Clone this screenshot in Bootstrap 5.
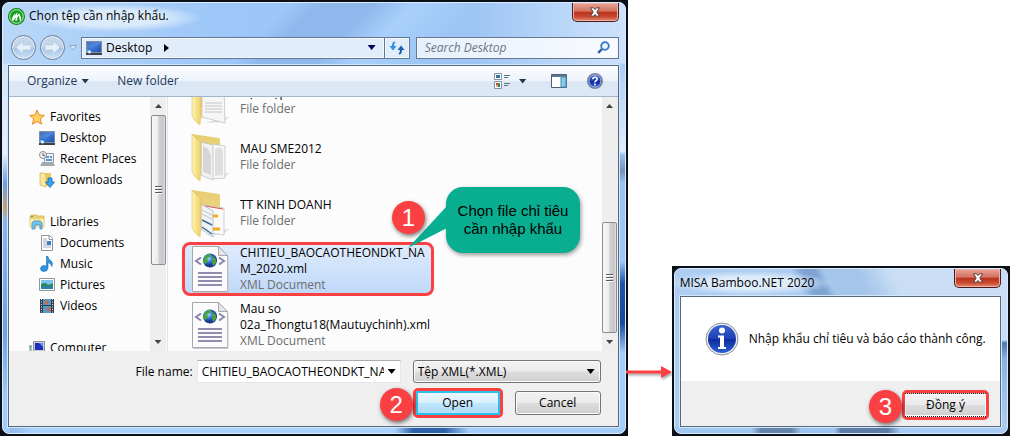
<!DOCTYPE html>
<html lang="vi">
<head>
<meta charset="utf-8">
<meta name="viewport" content="width=device-width, initial-scale=1">
<title>Chọn tệp cần nhập khẩu</title>
<link href="https://cdn.jsdelivr.net/npm/bootstrap@5.3.0/dist/css/bootstrap.min.css" rel="stylesheet">
<style>
:root { --callout-red: #fb4044; }
body { font: 12px/16px "Open Sans", "Noto Sans", sans-serif; color: #000; background: #fff; }
a { color: inherit; text-decoration: none; }
svg { display: block; flex: none; }
.stage { display: grid; grid-template-columns: minmax(0, 627fr) 44px minmax(0, 338fr); min-height: 100vh; }
.win { background: #0b0f18; padding: 2px; }
.glass { border-radius: 7px; border: 1px solid #dcecff; padding: 0 6px 6px 5px; }
.glass-main { background:
  linear-gradient(180deg, transparent 0 60px, #cfe3fa 61px, #e6f1fc 150px, #6f9fdf 180px, #c3a172 205px, #8ab6ee 218px, #6fa2e4 330px, #a3cdf9 400px) left / 7px 100% no-repeat,
  linear-gradient(180deg, transparent 0 60px, #a9cdf6 61px, #e0edfb 148px, #96bfee 152px, #7291b8 168px, #98c3f5 180px, #9cc8fa 258px, #1d55a6 280px, #154a9c 320px, #a3cdfa 350px) right / 7px 100% no-repeat,
  linear-gradient(90deg, #86b2ea, #a9d1fc 5% 63%, #2c62a8 66% 71%, #a4cdfa 75%) bottom / 100% 7px no-repeat,
  radial-gradient(ellipse 90px 14px at 110px 15px, #dcebfb 55%, transparent) no-repeat,
  linear-gradient(135deg, transparent 42%, #8fb9ec 46% 54%, #a9d0fb 60%, transparent 70%) 0 0 / 100% 66px no-repeat,
  linear-gradient(90deg, #b9d7f8, #9cc7f8 35%, #9cc5f4 75%, #cde2fb) #a3cbf7; }
.glass-msg { background:
  linear-gradient(180deg, transparent 70px, #c9dbee 71px, #4b79b2 74px, #8ab3e4 90px, #a9cbf0 150px) right / 7px 100% no-repeat,
  linear-gradient(90deg, #9fc8f3 23%, #6483a8 26% 35%, #9cc4f0 38% 48%, #5d7da6 50% 64%, #a5cbf4 68%) bottom / 100% 7px no-repeat,
  radial-gradient(ellipse 84px 12px at 75px 14px, #dfecfa 50%, transparent) no-repeat,
  linear-gradient(62deg, #aecdf2 48%, #7fa4d3 51% 54%, #a5c6ea 56% 64%, #c9def5 72%) #a9cdf4; }
.title-main { height: 28px; padding-bottom: 2px; }
.title-msg { line-height: 27px; }
.btn-x { width: 47px; height: 19px; padding: 0; border: 1px solid #4c1a1c; border-top: 0; border-radius: 0 0 5px 5px; box-shadow: inset 0 0 0 1px #eeb3a8;
  background: linear-gradient(#eaa697, #d3705f 46%, #b8311e 50%, #c9472f 75%, #e28a6c); display: grid; place-items: center; flex: none; }
.nav-row { padding: 4px 0 5px 3px; }
.nav-round { width: 25px; height: 25px; border-radius: 50%; border: 1px solid #6e7d92; padding: 0; display: grid; place-items: center;
  background: linear-gradient(#c6d6e8, #c1d5ec 48%, #a4c3e6 52%, #cfe4f8); box-shadow: inset 0 0 0 1px #e4effb; }
.field { height: 22px; border: 1px solid #66788f; background: #e1edfb; box-shadow: inset 0 0 0 1px #f1f7fe; }
.bare { border: 0; padding: 0; background: none; color: inherit; font: inherit; line-height: 16px; }
.address { flex: 1 1 303px; min-width: 0; }
.reload { padding: 0 4px; border-left: 0; }
.crumb { margin-left: 12px; }
.history { color: #000060; }
.search { flex: 0 1 203px; min-width: 0; margin-left: 6px; background: linear-gradient(90deg, #e6f0fc, #f8fbff); }
.search input { min-width: 0; outline: 0; }
.search input::placeholder { color: #70757c; font-style: italic; opacity: 1; }
.pane { border: 1px solid #56677e; outline: 1px solid #d5e7fb; background: #efefef; }
.commands { height: 31px; padding: 0 15px 0 18px; background: linear-gradient(#fcfdff, #edf3fb 50%, #dce6f4 52%, #dde8f6); border-bottom: 1px solid #a3b5cc; color: #1e395b; }
.tri { width: 8px; height: 5px; background: currentColor; clip-path: polygon(0 0, 100% 0, 50% 100%); display: inline-block; flex: none; }
.tri.flip { transform: rotate(180deg); }
.browser { height: 254px; background: #fcfcfc; overflow: hidden; }
.tree { flex: 0 0 141px; overflow: hidden; padding: 9px 0 0 20px; }
.tree ul { margin: 0 0 21px; padding: 0; list-style: none; }
.tree a { display: flex; align-items: center; gap: 5px; height: 21px; white-space: nowrap; }
.tree li + li a { padding-left: 10px; }
.bar { width: 16px; flex: none; background: #eee; padding: 0 1px; display: flex; flex-direction: column; align-items: center; color: #444; }
.bar-end { height: 18px; display: grid; place-items: center; flex: none; }
.bar .tri { width: 7px; height: 4px; }
.thumb { width: 15px; border: 1px solid #8d8d8d; border-radius: 2px; background: linear-gradient(90deg, #f7f7f7, #ececec 45%, #d2d2d4 52%, #c6c6ca 85%, #e2e2e2); display: grid; place-items: center; }
.grip { width: 7px; height: 8px; background: repeating-linear-gradient(#55585c 0 1px, #fff 1px 2px, transparent 2px 3px); }
.files { flex: 1; min-width: 0; list-style: none; margin: -24px 0 0 1px; padding: 0 0 0 14px; border-left: 1px solid #dae6f3; }
.files li { height: 56px; width: 252px; padding: 1px 0; position: relative; }
.files button { display: flex; align-items: center; text-align: left; gap: 11px; width: 100%; height: 54px; padding: 0 0 0 6px; border: 3px solid transparent; border-radius: 8px; background: none; font: inherit; color: #000; }
.files li.chosen button { border-color: var(--callout-red); background: linear-gradient(#dfebfb, #bfd9fa); }
.files small { display: block; font-size: 12px; color: #6d6d6d; }
.files .label-text { flex: 1; white-space: nowrap; }
.step { position: absolute; z-index: 3; width: 33px; height: 33px; border-radius: 50%; background: var(--callout-red); color: #fff; font: 24px/33px "Liberation Sans", sans-serif; text-align: center; box-shadow: 1px 2px 4px #0008; }
.step-file { left: 210px; top: -40px; }
.step-button { left: -36px; top: -3px; }
.tip { position: absolute; z-index: 2; left: 264px; top: -54px; width: 134px; height: 66px; border-radius: 17px; background: #09ae91; font: 15px/18px "Liberation Sans", sans-serif; box-shadow: 1px 2px 4px #0006; display: grid; place-content: center; text-align: center; white-space: nowrap; }
.tip svg { position: absolute; left: -38px; top: 18px; }
.answers { padding: 9px 17px 8px 16px; display: grid; grid-template-columns: minmax(0, 1fr) 204px 188px; column-gap: 12px; row-gap: 5px; }
.answers label { text-align: right; line-height: 23px; margin-right: -8px; }
.combo { height: 23px; background: #fff; border: 1px solid #e3e7ee; border-top-color: #abadb3; }
.combo input { min-width: 0; outline: 0; }
.chooser { position: relative; }
.chooser select { appearance: none; width: 100%; height: 23px; padding: 0 20px 0 4px; border: 1px solid #757575; border-radius: 3px; font: inherit; color: #000; background: linear-gradient(#f2f2f2, #ebebeb 49%, #dddddd 51%, #cfcfcf); box-shadow: inset 0 0 0 1px #fafafa; }
.chooser .tri { position: absolute; right: 6px; top: 9px; pointer-events: none; }
.btn-win { height: 24px; width: 86px; padding: 0; border: 1px solid #757575; border-radius: 3px; font: inherit; color: #000; background: linear-gradient(#f2f2f2, #ebebeb 49%, #dddddd 51%, #cfcfcf); box-shadow: inset 0 0 0 1px #fafafa; }
.btn-win.primary { width: 84px; border: 2px solid #2bc1ee; border-radius: 1px; background: linear-gradient(#eaf6fd, #d9f0fc 49%, #bee6fd 51%, #b2dcf5); box-shadow: none; }
.btn-win.confirm { width: 81px; border: 1px dotted #222; border-width: 1px 0; border-radius: 0; }
.marked { position: relative; border: 3px solid var(--callout-red); border-radius: 5px; line-height: 0; }
.marked .btn-win { line-height: 16px; }
.message { border: 1px solid #56677e; outline: 1px solid #d5e7fb; background: #fff; }
.notice { height: 84px; padding-left: 24px; gap: 10px; }
.confirm-row { background: #efefef; padding: 9px 11px 6px; }
.linker { align-self: end; margin-bottom: 56px; margin-left: -2px; width: 46px; position: relative; z-index: 2; filter: drop-shadow(1px 2px 1px #0005); }
</style>
</head>
<body>
<svg width="0" height="0" class="position-absolute" aria-hidden="true">
  <defs>
    <linearGradient id="gScreen" x1="0" y1="0" x2="1" y2="1"><stop offset="0" stop-color="#1b3f9a"/><stop offset=".5" stop-color="#3f79d6"/><stop offset="1" stop-color="#1d4aa6"/></linearGradient>
    <linearGradient id="gFold" x1="0" y1="0" x2="1" y2="0"><stop offset="0" stop-color="#fdf4b4"/><stop offset="1" stop-color="#edcf67"/></linearGradient>
    <linearGradient id="gBack" x1="0" y1="0" x2="0" y2="1"><stop offset="0" stop-color="#e6cd72"/><stop offset="1" stop-color="#f3dd8e"/></linearGradient>
    <radialGradient id="gGlobe" cx=".4" cy=".35"><stop offset="0" stop-color="#a5d8fa"/><stop offset=".6" stop-color="#2f6fd0"/><stop offset="1" stop-color="#16388f"/></radialGradient>
    <linearGradient id="gInfo" x1="0" y1="0" x2="0" y2="1"><stop offset="0" stop-color="#3b62cf"/><stop offset=".5" stop-color="#1c3fb4"/><stop offset=".52" stop-color="#0e2c9b"/><stop offset="1" stop-color="#2c62d8"/></linearGradient>
    <symbol id="desk" viewBox="0 0 16 14"><path d="M.5.5h15v11H.5z" fill="url(#gScreen)" stroke="#7f8ea3"/><path d="M1 1h14L8 6 1 8z" fill="#6e9fe8" opacity=".45"/><path d="M0 12h16v2H0z" fill="#39424e"/><path d="M1 9h3v2H1z" fill="#46c5ef"/><circle cx="3.500" cy="11" r="1.500" fill="#e8f7ff"/></symbol>
    <symbol id="folder" viewBox="0 0 38 48"><path d="M14 46l18-1 6-5-6 1z" fill="#b9b9b9" opacity=".5"/><path d="M1 1l20 3 7 1q1 0 1 2v34H10z" fill="url(#gBack)"/></symbol>
    <symbol id="flap" viewBox="0 0 38 48"><path d="M1 1q4 5 9 9v20l-1 2 1 1-1 15q-5-3-8-9z" fill="url(#gFold)" stroke="#dcbf62" stroke-width=".6"/></symbol>
    <symbol id="xml" viewBox="0 0 38 48"><path d="M1.500 1.500h26l9 9v36h-35z" fill="#fbfbfd" stroke="#a6a6ac"/><path d="M2 47.500h35V12" fill="none" stroke="#c9c9cf"/><path d="M27.500 1.500v9h9z" fill="#e4e4ea" stroke="#a6a6ac"/><path d="M10 12.500l-5 3.500 5 3.500M28 12.500l5 3.500-5 3.500" fill="none" stroke="#8885a8" stroke-width="2"/><circle cx="19" cy="15.500" r="7" fill="url(#gGlobe)"/><path d="M14 11q3-3 6-2l-1 3-3 1 1 4-3 2-2-3zM22 11l3 3v4l-3 3-1-4z" fill="#47a63c"/><path d="M7 28h24M7 32h24M7 36h24M7 40h24" stroke="#8f8cae" stroke-width="2"/></symbol>
    <symbol id="cross" viewBox="0 0 12 10"><path d="M1.500.8h3L6 2.600 7.500.8h3L7.800 5l2.700 4.200h-3L6 7.400 4.500 9.200h-3L4.200 5z" fill="#fff" stroke="#563b40"/></symbol>
  </defs>
</svg>

<main class="stage">
  <section class="win" aria-label="Chọn tệp">
    <div class="glass glass-main h-100 d-flex flex-column">
      <header class="d-flex justify-content-between">
        <div class="title-main d-flex align-items-center gap-1">
          <svg width="17" height="17" viewBox="0 0 16 16"><circle cx="8" cy="8" r="7.500" fill="#13a01d" stroke="#0f8417"/><circle cx="8" cy="8" r="6.400" fill="none" stroke="#d8f4d6" stroke-width=".8"/><path d="M3.500 11.500Q4 8 6.500 5q0 2-.5 3 1.500-3 3-4-.5 2-.8 3.500Q9.500 5.500 10.500 5q1.800 3 2 6.500l-1.500.5q0-3-1-5Q8.500 9 8.500 12H7q0-2 .3-3.500Q6 10 5.500 12z" fill="#fff"/></svg>
          <span>Chọn tệp cần nhập khẩu.</span>
        </div>
        <button class="btn-x" type="button" aria-label="Close"><svg width="12" height="10"><use href="#cross"/></svg></button>
      </header>
      <div class="nav-row d-flex align-items-center">
        <button class="nav-round" type="button" aria-label="Back"><svg width="15" height="13" viewBox="0 0 15 13"><path d="M0 6.500L7 0v4h8v5H7v4z" fill="#e7eff8" stroke="#b8c8da" stroke-width=".7"/></svg></button>
        <button class="nav-round ms-1" type="button" aria-label="Forward"><svg width="15" height="13" viewBox="0 0 15 13"><path d="M15 6.500L8 0v4H0v5h8v4z" fill="#e7eff8" stroke="#b8c8da" stroke-width=".7"/></svg></button>
        <svg class="ms-1 me-1" width="8" height="6" viewBox="0 0 8 6"><path d="M.5.5h7L4 5z" fill="#dbe9f8" stroke="#91a9c6"/></svg>
        <div class="field address d-flex align-items-center">
          <svg class="ms-1 me-1" width="16" height="14"><use href="#desk"/></svg>
          <a href="#">Desktop</a>
          <svg class="crumb" width="5" height="8" viewBox="0 0 5 8"><path d="M0 0l5 4-5 4z"/></svg>
          <button class="bare ms-auto px-2 d-flex history" type="button" aria-label="Previous locations"><span class="tri"></span></button>
        </div>
        <button class="field reload" type="button" aria-label="Refresh"><svg width="16" height="14" viewBox="0 0 16 14"><path d="M5.500.5Q3 1 3 5H.5L4 9.500 7.500 5H5Q5 2.500 6.500 1z" fill="#2c93d8"/><path d="M10.500 13.500Q13 13 13 9h2.500L12 4.500 8.500 9H11q0 2.500-1.500 4z" fill="#1c5fae"/></svg></button>
        <div class="field search d-flex align-items-center px-2">
          <input class="bare flex-fill" type="search" placeholder="Search Desktop" aria-label="Search Desktop">
          <svg width="13" height="13" viewBox="0 0 13 13"><circle cx="8" cy="5" r="3.800" fill="#eaf5ff" stroke="#3279c8" stroke-width="1.800"/><path d="M5 8L1.200 11.800" stroke="#2a5cab" stroke-width="2.400"/></svg>
        </div>
      </div>
      <div class="pane flex-fill">
        <div class="commands d-flex align-items-center">
          <button class="bare d-flex align-items-center gap-1" type="button">Organize <span class="tri"></span></button>
          <button class="bare ms-4 ps-1" type="button">New folder</button>
          <button class="bare ms-auto d-flex align-items-center gap-2" type="button" aria-label="Change view"><svg width="17" height="16" viewBox="0 0 17 16"><path d="M.5.5h7v6h-7zM.5 8.500h7v7h-7z" fill="#fff" stroke="#8593a5"/><path d="M2 2h4v3H2z" fill="#2b75a8"/><path d="M2 10h2v2H2z" fill="#d8443a"/><path d="M4 10h2v2H4z" fill="#3c9b45"/><path d="M2 12h2v2H2z" fill="#e4b92e"/><path d="M4 12h2v2H4z" fill="#3568c2"/><path d="M10 2.500h6M10 4.500h4M10 10.500h6M10 12.500h4" stroke="#5d6f86"/></svg><span class="tri"></span></button>
          <button class="bare ms-4" type="button" aria-label="Preview pane"><svg width="16" height="14" viewBox="0 0 16 14"><path d="M.5.5h15v13H.5z" fill="#fff" stroke="#4d6079"/><path d="M1 1h14v2H1z" fill="#63788f"/><path d="M10 3h5v10h-5z" fill="#86cbea" stroke="#4c8db3"/></svg></button>
          <button class="bare ms-3 ps-1" type="button" aria-label="Help"><svg width="16" height="16" viewBox="0 0 16 16"><circle cx="8" cy="8" r="7.300" fill="url(#gInfo)" stroke="#7b879b" stroke-width="1.400"/><circle cx="8" cy="8" r="6" fill="none" stroke="#e2e8f6" stroke-width=".7"/><path d="M5.700 6.200Q5.800 4.200 8 4.200t2.200 1.900Q10.200 7 9 7.700T8 9.500" fill="none" stroke="#fff" stroke-width="1.600"/><circle cx="8" cy="11.600" r="1" fill="#fff"/></svg></button>
        </div>
        <div class="browser d-flex">
          <nav class="tree" aria-label="Places">
            <ul>
              <li><a href="#"><svg width="16" height="16" viewBox="0 0 16 16"><path d="M8 1l2 5 5.300.4-4 3.500 1.200 5.300L8 12.400l-4.500 2.800 1.200-5.300-4-3.500L6 6z" fill="#ffd35a" stroke="#e9872b"/></svg>Favorites</a></li>
              <li><a href="#"><svg width="16" height="14"><use href="#desk"/></svg>Desktop</a></li>
              <li><a href="#"><svg width="16" height="16" viewBox="0 0 16 16"><path d="M5.500 2.500h9v9h-9z" fill="#edf3f9" stroke="#8e9aa8"/><path d="M7 5h3v2H7zM11 5h2v2h-2zM7 8h6v2H7z" fill="#5f94c9"/><path d="M1 15l2-4h11l2 4z" fill="#a5a8ad"/><circle cx="4" cy="4" r="3.500" fill="#f3f3f3" stroke="#858b93"/><path d="M4 2v2.500h2" fill="none" stroke="#555"/></svg>Recent Places</a></li>
              <li><a href="#"><svg width="16" height="16" viewBox="0 0 16 16"><path d="M5 1h7v13H5z" fill="#e8c965"/><path d="M1 1h4l2 2v12l-6-2z" fill="#f8e798" stroke="#d3b14e" stroke-width=".7"/><path d="M9 6h4v4h2.500L11 15.500 6.500 10H9z" fill="#35a3ee" stroke="#1566ac" stroke-width=".8"/></svg>Downloads</a></li>
            </ul>
            <ul>
              <li><a href="#"><svg width="16" height="16" viewBox="0 0 16 16"><path d="M1 3l1-2h5l1 1h7v11H1z" fill="#ecd27a" stroke="#c9a646" stroke-width=".7"/><path d="M1 5h14v8H1z" fill="#f9eaa6"/><path d="M2 2.500h2" stroke="#3fae49"/><path d="M3 15V9l2-2h6l2 2v6h-2v-4H6v4z" fill="#74c5ee" stroke="#3b8fc4" stroke-width=".8"/></svg>Libraries</a></li>
              <li><a href="#"><svg width="16" height="16" viewBox="0 0 16 16"><path d="M2.500.5h8l3 3v12h-11z" fill="#fff" stroke="#8a95a2"/><path d="M10 .5v4h4" fill="none" stroke="#8a95a2"/><path d="M4 4h4M4 6h4M4 8h4M4 10h8M4 12h8" stroke="#a4afbb"/><path d="M8 6h4v4H8z" fill="#3c7ec6"/></svg>Documents</a></li>
              <li><a href="#"><svg width="16" height="16" viewBox="0 0 16 16"><path d="M7.500 0h1.200q.5 3 3 4.500 3 2.500 1 6 0-2.500-3.700-4V12q-.5 3.500-4 3.500T1.500 12.500q.5-3 3.500-3 1.500 0 2.500.7z" fill="#2f95df" stroke="#1b69b0" stroke-width=".6"/></svg>Music</a></li>
              <li><a href="#"><svg width="16" height="13" viewBox="0 0 16 13"><path d="M.5.5h15v12H.5z" fill="#fff" stroke="#8d98a3"/><path d="M2 2h12v5H2z" fill="#7cc4ef"/><path d="M2 6q5-2 6 0t6-1v6H2z" fill="#2e8b57"/><path d="M2 9q6-2 12 0v2H2z" fill="#2b7fae"/></svg>Pictures</a></li>
              <li><a href="#"><svg width="16" height="16" viewBox="0 0 16 16"><path d="M1 1h14v14H1z" fill="#3a3d42"/><path d="M4 1h8v6H4zM4 8h8v7H4z" fill="#4c9cd6"/><path d="M5 4l3-2 2 2-2 3zM7 11l3-2 2 3-3 2z" fill="#c96a4c"/><path d="M2.500 1v14M13.500 1v14" stroke="#e8e8e8" stroke-dasharray="1 1.500"/></svg>Videos</a></li>
            </ul>
            <ul>
              <li><a href="#"><svg width="16" height="14" viewBox="0 0 16 14"><path d="M4.500.5h11v10h-11z" fill="#c8ccd2" stroke="#8a9098"/><path d="M6 2h8v7H6z" fill="#1a2fc0"/><path d="M10 2h4v4z" fill="#6f8ff0"/><path d="M0 4h3v9H0z" fill="#b4b9c0"/><path d="M1 5h1v2H1z" fill="#23b52c"/><path d="M5 12h10v1.500H5z" fill="#9aa0a8"/></svg>Computer</a></li>
            </ul>
          </nav>
          <div class="bar" aria-hidden="true"><span class="bar-end"><i class="tri flip"></i></span><span class="thumb" style="flex:149"><i class="grip"></i></span><span style="flex:69"></span><span class="bar-end"><i class="tri"></i></span></div>
          <ul class="files">
            <li><button type="button"><svg width="38" height="48" viewBox="0 0 38 48"><use href="#folder"/><path d="M11 8h22l1 38-23-6z" fill="#f6f6f6" stroke="#bbb" stroke-width=".7"/><path d="M14 26h17M14 29h17M14 32h17M14 35h17" stroke="#c4c4c4"/><use href="#flap"/></svg><span class="label-text">Bộ nhập<small>File folder</small></span></button></li>
            <li><button type="button"><svg width="38" height="48" viewBox="0 0 38 48"><use href="#folder"/><path d="M21 11l13 2v32l-13 1z" fill="#f8f8f8" stroke="#bbb" stroke-width=".7"/><path d="M24 16l5-2 3 4v24l-8 1z" fill="#dedede"/><path d="M10 9l12 3v35l-12-5z" fill="#f2f2f2" stroke="#bbb" stroke-width=".7"/><path d="M12 13l5 3 3 6v20l-8-3z" fill="#d6d6d6"/><use href="#flap"/></svg><span class="label-text">MAU SME2012<small>File folder</small></span></button></li>
            <li><button type="button"><svg width="38" height="48" viewBox="0 0 38 48"><use href="#folder"/><path d="M13 16l20 3v27l-14-2z" fill="#fafafa" stroke="#bbb" stroke-width=".7"/><path d="M14 17l18 3" stroke="#e05555"/><path d="M22 27h5M22 40h7" stroke="#f0ad1c" stroke-width="3"/><path d="M10 15l12 7v26l-12-8z" fill="#f1f3f6" stroke="#aaa" stroke-width=".7"/><path d="M11 21l10 5M11 25l10 5" stroke="#bcc6d2"/><path d="M11 31l10 5M11 38l10 7" stroke="#3a6e92" stroke-width="1.500"/><use href="#flap"/></svg><span class="label-text">TT KINH DOANH<small>File folder</small></span></button></li>
            <li class="chosen"><button type="button"><svg width="38" height="48"><use href="#xml"/></svg><span class="label-text">CHITIEU_BAOCAOTHEONDKT_NA<br>M_2020.xml<small>XML Document</small></span></button>
              <span class="step step-file">1</span>
              <div class="tip"><svg width="40" height="44" viewBox="0 0 40 44"><path d="M0 43L39 1v22z" fill="#09ae91"/></svg>Chọn file chỉ tiêu<br>cần nhập khẩu</div>
            </li>
            <li><button type="button"><svg width="38" height="48"><use href="#xml"/></svg><span class="label-text">Mau so<br>02a_Thongtu18(Mautuychinh).xml<small>XML Document</small></span></button></li>
          </ul>
          <div class="bar" aria-hidden="true"><span class="bar-end"><i class="tri flip"></i></span><span style="flex:108"></span><span class="thumb" style="flex:110"><i class="grip"></i></span><span class="bar-end"><i class="tri"></i></span></div>
        </div>
        <form class="answers">
          <label for="fileName">File name:</label>
          <div class="combo d-flex align-items-center"><input class="bare flex-fill ps-1" id="fileName" type="text" value="CHITIEU_BAOCAOTHEONDKT_NAM_2020.xml"><button class="bare d-flex px-1" type="button" aria-label="Recent names"><span class="tri"></span></button></div>
          <div class="chooser"><select aria-label="File type"><option>Tệp XML(*.XML)</option></select><span class="tri"></span></div>
          <span></span><span></span>
          <div class="d-flex justify-content-between align-items-center">
            <span class="marked"><span class="step step-button">2</span><button class="btn-win primary" type="button">Open</button></span>
            <button class="btn-win" type="button">Cancel</button>
          </div>
        </form>
      </div>
    </div>
  </section>

  <svg class="linker" width="46" height="16" viewBox="0 0 46 16" aria-hidden="true"><path d="M0 8h36" stroke="#fb4044" stroke-width="3"/><path d="M35 2l11 6-11 6z" fill="#fb4044"/></svg>

  <section class="win align-self-end" aria-label="MISA Bamboo.NET 2020">
    <div class="glass glass-msg">
      <header class="d-flex justify-content-between">
        <span class="title-msg">MISA Bamboo.NET 2020</span>
        <button class="btn-x" type="button" aria-label="Close"><svg width="12" height="10"><use href="#cross"/></svg></button>
      </header>
      <div class="message">
        <div class="notice d-flex align-items-center">
          <svg width="34" height="34" viewBox="0 0 34 34"><circle cx="17" cy="17" r="16" fill="#eceff4" stroke="#8a8f98"/><circle cx="17" cy="17" r="14" fill="url(#gInfo)"/><circle cx="17" cy="8.500" r="3" fill="#fff"/><path d="M13 13.500h6V25h2v2h-8v-2h2v-9.500h-2z" fill="#fff"/></svg>
          <span>Nhập khẩu chỉ tiêu và báo cáo thành công.</span>
        </div>
        <div class="confirm-row d-flex justify-content-end">
          <span class="marked"><span class="step step-button">3</span><button class="btn-win confirm" type="button">Đồng ý</button></span>
        </div>
      </div>
    </div>
  </section>
</main>
<script src="https://cdn.jsdelivr.net/npm/bootstrap@5.3.0/dist/js/bootstrap.bundle.min.js"></script>
</body>
</html>
